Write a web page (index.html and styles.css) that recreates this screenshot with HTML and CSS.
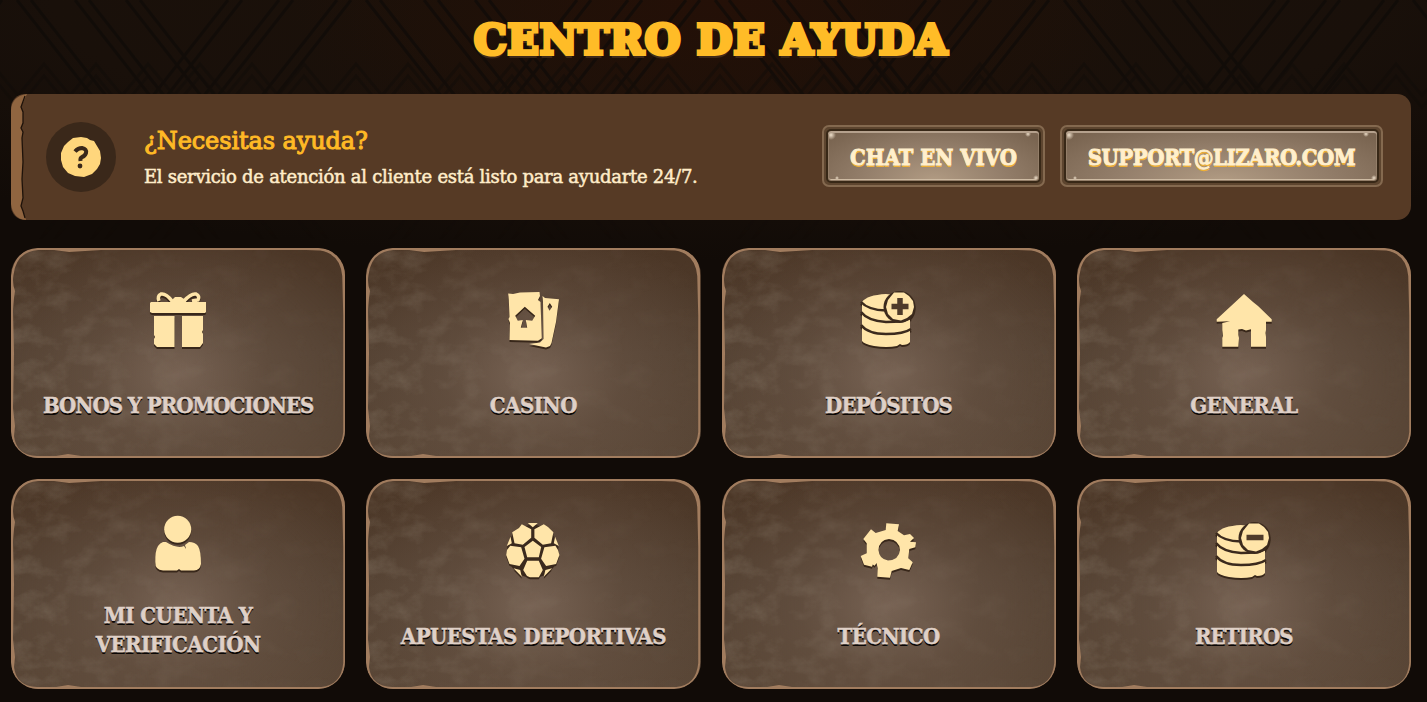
FILE: index.html
```html
<!DOCTYPE html>
<html lang="es">
<head>
  <meta charset="UTF-8" />
  <meta name="viewport" content="width=device-width, initial-scale=1.0"/>
  <title>Centro de ayuda</title>
  <link rel="stylesheet" href="styles.css">
</head>
<body>
  <svg class="bg" width="1427" height="240" aria-hidden="true">
    <defs>
      <pattern id="weave" width="349" height="240" patternUnits="userSpaceOnUse" x="10">
        <path d="M7 0l188 240M21 0l188 240M65 0l188 240M79 0l188 240M116 0l188 240M130 0l188 240M341 0L153 240M327 0L139 240M283 0L95 240M269 0L81 240M232 0L44 240M218 0L30 240"/>
      </pattern>
      <pattern id="zigzag" width="52" height="200" patternUnits="userSpaceOnUse" x="18" y="60">
        <path d="M-2 38L26 4l28 34M-2 50L26 16l28 34"/>
      </pattern>
      <!-- shared by every card -->
      <symbol id="frame" viewBox="0 0 334 210" preserveAspectRatio="none">
        <path fill-rule="evenodd" d="M26 0H308Q334 2 334 28V184Q332 208 308 210H24Q2 208 0 184V28Q3 2 26 0Z
          M27 2Q5 4 2.500 27Q1 35 4 43L3 50L2 62L3 105L2 160L4 178L3 188Q5 207 26 208L45 208L57 206L70 208H310Q330 206 332 184L332 90V68L331 28Q329 6 309 2.500L295 2L90 2L58 4L43 2Z"/>
      </symbol>
      <filter id="grain" x="0" y="0" width="100%" height="100%">
        <feTurbulence type="fractalNoise" baseFrequency="0.035 0.05" numOctaves="5" seed="8"/>
        <feColorMatrix values="0 0 0 0 .62  0 0 0 0 .56  0 0 0 0 .45  2 0 0 0 -.85"/>
      </filter>
      <linearGradient id="fade">
        <stop offset="0" stop-color="#fff"/>
        <stop offset=".5" stop-color="#fff" stop-opacity=".3"/>
        <stop offset="1" stop-color="#fff" stop-opacity=".1"/>
      </linearGradient>
      <mask id="leftSide" maskContentUnits="objectBoundingBox">
        <rect width="1" height="1" fill="url(#fade)"/>
      </mask>
    </defs>
    <rect width="1427" height="240" fill="url(#weave)"/>
    <rect class="zigzag" y="60" width="1427" height="180" fill="url(#zigzag)"/>
  </svg>

  <main class="container">
    <h1 class="title">CENTRO DE AYUDA</h1>

    <section class="banner">
      <svg class="banner-edge" viewBox="0 0 16 126">
        <path class="edge-fill" d="M16 0Q1 2 0 16V110Q2 125 15 126L12 117L10 112L12 104L11 85L12 68L11 44L12 38L10 34L12 29V18L10 13Z"/>
        <path class="edge-line" d="M14 2L10 13L12 18V29L10 34L12 38L11 44L12 68L11 85L12 104L10 112L12 117L14 124"/>
      </svg>
      <div class="banner-icon">
        <svg viewBox="0 0 42 42">
          <path class="disc" d="M21 1L27 2L30 4L34 5L37 10L40 15L41 22L40 28L37 33L32 38L24 41L15 40L8 37L3 31L1 24L1 17L4 10L8 6L13 2Z"/>
          <path class="mark" d="M15 15.500Q18 12 22 12Q27 13 26 17Q25 20 22 21Q20 22 20.500 25"/>
          <circle class="dot" cx="20" cy="30" r="2.400"/>
        </svg>
      </div>
      <div class="banner-text">
        <h2>¿Necesitas ayuda?</h2>
        <p>El servicio de atención al cliente está listo para ayudarte 24/7.</p>
      </div>
      <div class="banner-buttons">
        <button class="btn chat"><span>CHAT EN VIVO</span></button>
        <button class="btn mail"><span>SUPPORT@LIZARO.COM</span></button>
      </div>
    </section>

    <section class="grid">
      <a class="card">
        <svg class="card-frame"><rect class="grain" width="100%" height="100%"/><use href="#frame" width="100%" height="100%"/></svg>
        <svg class="icon" viewBox="0 0 56 56">
          <path d="M1 10H20L23 7L25 5H31L34 7L36 10H56V20L55 21H2L0 20V11ZM4 24H24.500V55H7L4 52V47L5 45L4 43ZM32 24H53V38L52 40L53 42V51L50 55H32Z"/>
          <path class="bow" d="M22 9Q16 1 11 2Q7 4 9 9M34 9Q41 1 46 2Q50 4 48 8L42 9"/>
        </svg>
        <span class="label long">BONOS Y PROMOCIONES</span>
      </a>
      <a class="card">
        <svg class="card-frame"><rect class="grain" width="100%" height="100%"/><use href="#frame" width="100%" height="100%"/></svg>
        <svg class="icon" viewBox="0 0 56 56">
          <path fill-rule="evenodd" d="M37.500 4L40 6L54 7.300L51 30L46.500 51L45 54L41 55.500L24 52L35 50.500L38.500 47L38 10ZM44.800 11L42.500 14.700L44.500 18.700L47.200 14.700Z"/>
          <path fill-rule="evenodd" d="M3.200 1.500L8 2L15 .6L34.500 0L35 4L33 8L35.500 10L36.800 46.300L33 48.700L4.500 48L5 31L3.500 27L4.500 25L3.800 8ZM19.800 14.700L10.200 23.700L12.800 28.700L17.800 28L15.800 35.700H22.200L20.800 28L27.200 28.700L30.200 23.700Z"/>
        </svg>
        <span class="label">CASINO</span>
      </a>
      <a class="card">
        <svg class="card-frame"><rect class="grain" width="100%" height="100%"/><use href="#frame" width="100%" height="100%"/></svg>
        <svg class="icon" viewBox="0 0 56 56">
          <path d="M1 10Q6 3 25 2Q44 3 49 12V50Q47 53 41 53L39 52L36 54Q26 56 13 54Q3 52 1 49Z"/>
          <path class="cut" d="M0 10Q7 18 25 18.500M0 20Q7 29 25 30Q43 30 50 26M0 33Q7 42 25 42Q43 42 50 37"/>
          <circle class="gap" cx="38.500" cy="15" r="16"/>
          <path d="M33 .5L43 .4L48 4L52 9L53 15L51 22L46 26L40 28.500L32 27L27 22L25 15L27 8Z"/>
          <path class="sign" d="M30.500 14.500H47.500M39 6V23"/>
        </svg>
        <span class="label mid">DEPÓSITOS</span>
      </a>
      <a class="card">
        <svg class="card-frame"><rect class="grain" width="100%" height="100%"/><use href="#frame" width="100%" height="100%"/></svg>
        <svg class="icon" viewBox="0 0 56 56">
          <path d="M28 2L37 10L42 14L55.700 27.300V29.700H50V38L49.500 41L50 45V54.700H35V37.300L30 38.500L26 37L22.300 37.500V43L23 46L22.300 54.700H6.300V46L7 44L6.300 38V31L14 29.300L.7 29.700V27.300Z"/>
        </svg>
        <span class="label">GENERAL</span>
      </a>
      <a class="card">
        <svg class="card-frame"><rect class="grain" width="100%" height="100%"/><use href="#frame" width="100%" height="100%"/></svg>
        <svg class="icon" viewBox="0 0 56 56">
          <path d="M13 26H16Q27 33 34 30L36 33L35 29L39 26Q45 26 48 30Q51 35 51 48Q50 54 44 54.500H31L29 53L27 54.500H13Q5 54 5.300 46Q5 35 8 30Q10 27 13 26Z"/>
          <circle cx="27.700" cy="13.300" r="13.500"/>
        </svg>
        <span class="label two-lines">MI CUENTA Y<br>VERIFICACIÓN</span>
      </a>
      <a class="card">
        <svg class="card-frame"><rect class="grain" width="100%" height="100%"/><use href="#frame" width="100%" height="100%"/></svg>
        <svg class="icon" viewBox="0 0 56 56">
          <circle class="gap" cx="27.800" cy="27.500" r="25.500"/>
          <path d="M22.800 0H32.800L27.800 4.300ZM16.800 1.300L26.200 6.300V14.700L17.800 21.700L9.500 20.300L7.200 9.300L14 5ZM38.800 1.300L29.400 6.300V14.700L37.800 21.700L46.100 20.300L48.400 9.300L43 4ZM27.800 17.700L36.200 24L33.800 34.300H22.200L19.500 24ZM5.200 22.700L16.200 24.300L19.500 35.700L14.500 43L4.500 41L1.200 32L2 27ZM50.400 22.700L39.400 24.300L36.100 35.700L41.100 43L51.100 41L54.400 32L53 27ZM22.200 37.700H33.800L37.800 47L33.800 54.300H25L22 53L18.200 47ZM5.500 13.700L6.800 20.300L1.800 23ZM50.100 13.700L48.800 20.300L53.800 23ZM8.500 45.300L15.200 47L16.800 53.700ZM47.100 45.300L40.400 47L38.800 53.700Z"/>
        </svg>
        <span class="label">APUESTAS DEPORTIVAS</span>
      </a>
      <a class="card">
        <svg class="card-frame"><rect class="grain" width="100%" height="100%"/><use href="#frame" width="100%" height="100%"/></svg>
        <svg class="icon" viewBox="0 0 56 56">
          <path fill-rule="evenodd" d="M25.300 .3L38 1.300L36.700 8L43 12.300L49 11L53 15L49 18.700L55 19.300L54.300 24.300L48.300 26L47.300 35.300L51.700 39.300L48.300 47L40 45L30.700 48L29 54.700L16.300 53.700L16.700 45.300L15.500 40L13.700 42.700L11.700 41.500L11 43.700L3 41.700L-.3 33L5.700 30.300V20.300L2.300 16L10 6.300L14.700 10L24.700 7ZM28 16Q18 17 17.500 27Q18 36 27 37.500Q38 37 39 27Q38 17 28 16Z"/>
        </svg>
        <span class="label">TÉCNICO</span>
      </a>
      <a class="card">
        <svg class="card-frame"><rect class="grain" width="100%" height="100%"/><use href="#frame" width="100%" height="100%"/></svg>
        <svg class="icon" viewBox="0 0 56 56">
          <path d="M1 10Q6 3 25 2Q44 3 49 12V50Q47 53 41 53L39 52L36 54Q26 56 13 54Q3 52 1 49Z"/>
          <path class="cut" d="M0 10Q7 18 25 18.500M0 20Q7 29 25 30Q43 30 50 26M0 33Q7 42 25 42Q43 42 50 37"/>
          <circle class="gap" cx="38.500" cy="15" r="16"/>
          <path d="M33 .5L43 .4L48 4L52 9L53 15L51 22L46 26L40 28.500L32 27L27 22L25 15L27 8Z"/>
          <path class="sign" d="M30.500 14.500H47.500"/>
        </svg>
        <span class="label mid">RETIROS</span>
      </a>
    </section>
  </main>
</body>
</html>
```
FILE: styles.css
```css
* { box-sizing: border-box; }

body {
  margin: 0;
  height: 702px;
  overflow: hidden;
  position: relative;
  font-family: 'DejaVu Serif', serif;
  background:
    radial-gradient(ellipse 420px 200px at 50% 0, #241007, transparent),
    radial-gradient(ellipse 1100px 260px at 50% 0, #1c1109, #19100a 60%, transparent),
    #110b07;
}

.bg {
  position: absolute;
  top: 0;
  left: 0;
  z-index: -1;
  opacity: 0.7;
  -webkit-mask-image: linear-gradient(#000 30%, transparent);
  mask-image: linear-gradient(#000 30%, transparent);
}

.bg path {
  fill: none;
  stroke: #0f0b08;
  stroke-width: 3.2;
}

.bg symbol path {
  fill: #a17c5e;
  stroke: none;
}

.zigzag { opacity: 0.6; }

.container {
  padding: 0 16px 0 11px;
}

.title {
  margin: 0;
  height: 94px;
  padding-top: 12px;
  text-align: center;
  white-space: nowrap;
  font-size: 41px;
  line-height: 56px;
  letter-spacing: 1px;
  color: #ffbc27;
  -webkit-text-stroke: 4px #ffbc27;
  text-shadow: 0 4px #3d2919;
}

.banner {
  position: relative;
  display: flex;
  align-items: center;
  height: 126px;
  padding: 0 28px 0 35px;
  border-radius: 14px;
  background: #563a25;
}

.banner-edge {
  position: absolute;
  left: 0;
  top: 0;
  width: 16px;
  height: 126px;
}

.edge-fill { fill: #906540; }

.edge-line {
  fill: none;
  stroke: #1e120a;
  stroke-width: 1.3;
}

.banner-icon {
  display: flex;
  align-items: center;
  justify-content: center;
  width: 70px;
  height: 70px;
  margin-right: 28px;
  border-radius: 50%;
  background: #3a281a;
}

.banner-icon svg {
  width: 42px;
  height: 42px;
}

.disc { fill: #ffd67c; }

.mark {
  fill: none;
  stroke: #3a281a;
  stroke-width: 4;
}

.dot { fill: #3a281a; }

.banner-text {
  flex: 1;
  white-space: nowrap;
}

.banner-text h2 {
  margin: 0;
  padding-top: 2px;
  font-size: 24px;
  line-height: 34px;
  font-weight: normal;
  letter-spacing: -0.1px;
  color: #ffb925;
  -webkit-text-stroke: 1px #ffb925;
}

.banner-text p {
  margin: 4px 0 0;
  font-size: 18px;
  line-height: 30px;
  letter-spacing: -0.28px;
  color: #ffecc9;
  -webkit-text-stroke: 0.5px #ffecc9;
}

.banner-buttons {
  display: flex;
  gap: 15px;
  padding-bottom: 2px;
}

.btn {
  height: 62px;
  padding: 0;
  border: 2px solid #84694f;
  border-radius: 7px;
  background: #5d452f;
  font: bold 22px 'DejaVu Serif Condensed', 'DejaVu Serif', serif;
  font-stretch: condensed;
  white-space: nowrap;
  cursor: pointer;
}

.btn span {
  display: flex;
  align-items: center;
  justify-content: center;
  height: 54px;
  margin: 0 2px;
  padding-top: 2px;
  border: 2px solid #382817;
  border-radius: 5px;
  box-shadow: inset 0 2px #b5a18d, inset 0 0 0 1px #937e69, inset 0 -1px #64503d, inset 0 -2px #cebba3;
  background:
    radial-gradient(circle at 3px 4px, #efe0cb, transparent 5px),
    radial-gradient(circle at calc(100% - 11px) 3px, #efe0cb, transparent 3px),
    radial-gradient(circle at calc(100% - 3px) calc(100% - 3px), #efe0cb, transparent 3px),
    radial-gradient(circle at 9px calc(100% - 3px), #efe0cb, transparent 2px),
    radial-gradient(ellipse 65% 130% at 50% 100%, #b19b83, #947f6b 50%, #796450);
  color: #ffefcc;
  -webkit-text-stroke: 0.8px #ffefcc;
  text-shadow: 0 2px #edaf36;
}

.btn:hover { filter: brightness(1.08); }

.chat { width: 223px; letter-spacing: 0; }
.mail { width: 323px; letter-spacing: -0.5px; }

.grid {
  display: grid;
  grid-template-columns: repeat(4, 1fr);
  gap: 21px;
  margin-top: 28px;
}

.card {
  position: relative;
  display: flex;
  flex-direction: column;
  align-items: center;
  justify-content: center;
  height: 210px;
  padding-top: 6px;
  border-radius: 27px;
  overflow: hidden;
  background:
    radial-gradient(ellipse 60% 75% at 50% 60%, rgba(125, 104, 89, 0.85), rgba(114, 93, 78, 0.4) 45%, transparent),
    linear-gradient(#4a3525, #524031 50%, #584535);
  cursor: pointer;
}

.card-frame {
  position: absolute;
  inset: 0;
  width: 100%;
  height: 100%;
}

.grain {
  filter: url(#grain);
  mask: url(#leftSide);
  opacity: 0.22;
}

.icon {
  position: relative;
  width: 56px;
  height: 56px;
  margin-bottom: 29px;
  overflow: visible;
  fill: #ffe5a9;
  filter: drop-shadow(0 2.5px #38271a);
}

.bow {
  fill: none;
  stroke: #ffe5a9;
  stroke-width: 3.5;
}

.cut {
  fill: none;
  stroke: #3b2a1d;
  stroke-width: 2.5;
}

.gap { fill: #3b2a1d; }

.sign {
  fill: none;
  stroke: #4f3b2a;
  stroke-width: 5.5;
}

.label {
  position: relative;
  display: flex;
  align-items: flex-end;
  min-height: 43px;
  text-align: center;
  white-space: nowrap;
  font-family: 'DejaVu Serif Condensed', 'DejaVu Serif', serif;
  font-stretch: condensed;
  font-size: 22px;
  font-weight: bold;
  line-height: 29px;
  letter-spacing: -0.5px;
  color: #dfd0c7;
  -webkit-text-stroke: 0.5px #dfd0c7;
  text-shadow: 0 2px #0b0705;
}

.long { letter-spacing: -1px; }
.mid { letter-spacing: -0.8px; }
.two-lines { display: block; }
```
